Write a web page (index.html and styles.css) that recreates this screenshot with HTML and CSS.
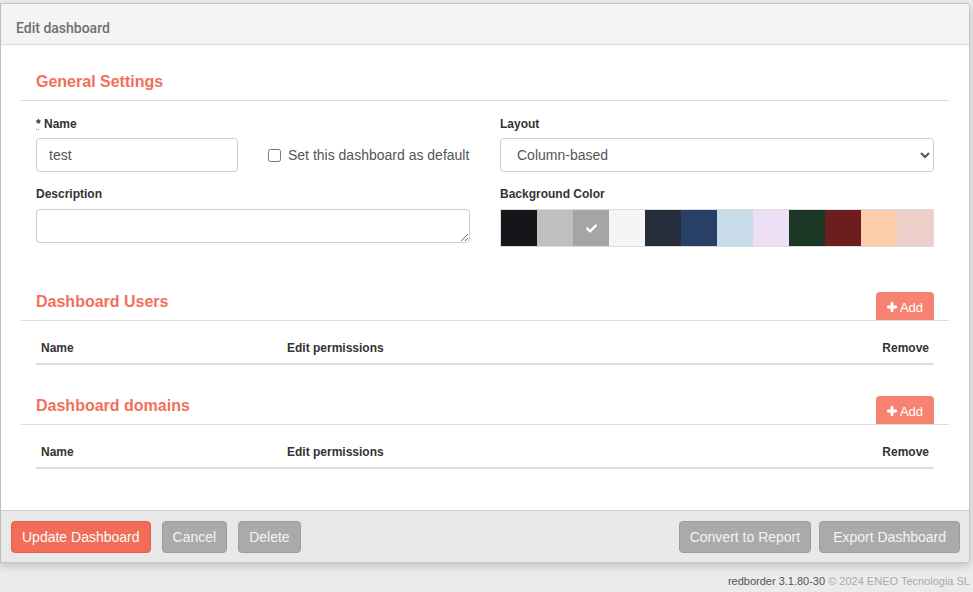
FILE: index.html
```html
<!DOCTYPE html>
<html>
<head>
<meta charset="utf-8">
<title>Edit dashboard</title>
<link rel="stylesheet" href="styles.css">
</head>
<body>
<div class="modal">
  <div class="modal-header">
    <h4 class="modal-title">Edit dashboard</h4>
  </div>
  <div class="modal-body">
    <section class="section">
      <div class="section-head">
        <h3 class="section-title">General Settings</h3>
      </div>
      <div class="form-grid">
        <div class="col">
          <div class="name-row">
            <div class="field">
              <label class="lbl"><abbr title="required">*</abbr> Name</label>
              <input class="ctrl" type="text" value="test">
            </div>
            <label class="check">
              <input type="checkbox" class="cb">
              <span>Set this dashboard as default</span>
            </label>
          </div>
        </div>
        <div class="col">
          <div class="field">
            <label class="lbl">Layout</label>
            <select class="ctrl sel">
              <option>Column-based</option>
            </select>
          </div>
        </div>
        <div class="col">
          <div class="field">
            <label class="lbl lbl2">Description</label>
            <textarea class="ctrl ta"></textarea>
          </div>
        </div>
        <div class="col">
          <div class="field">
            <label class="lbl lbl2">Background Color</label>
            <div class="swatches">
              <span class="sw c1"></span>
              <span class="sw c2"></span>
              <span class="sw c3 selected">
                <svg width="11" height="9" viewBox="0 0 11 9"><path d="M1.2 4.6 L4.1 7.4 L9.8 1.6" fill="none" stroke="#fff" stroke-width="2.4" stroke-linecap="round" stroke-linejoin="round"/></svg>
              </span>
              <span class="sw c4"></span>
              <span class="sw c5"></span>
              <span class="sw c6"></span>
              <span class="sw c7"></span>
              <span class="sw c8"></span>
              <span class="sw c9"></span>
              <span class="sw c10"></span>
              <span class="sw c11"></span>
              <span class="sw c12"></span>
            </div>
          </div>
        </div>
      </div>
    </section>

    <section class="section users">
      <div class="section-head">
        <h3 class="section-title">Dashboard Users</h3>
        <button class="add-btn"><svg width="10" height="10" viewBox="0 0 10 10"><path d="M5 1.2 V8.8 M1.2 5 H8.8" stroke="#fff" stroke-width="2.8" stroke-linecap="round"/></svg>Add</button>
      </div>
      <div class="table">
        <div class="th">Name</div>
        <div class="th">Edit permissions</div>
        <div class="th right">Remove</div>
      </div>
    </section>

    <section class="section domains">
      <div class="section-head">
        <h3 class="section-title">Dashboard domains</h3>
        <button class="add-btn"><svg width="10" height="10" viewBox="0 0 10 10"><path d="M5 1.2 V8.8 M1.2 5 H8.8" stroke="#fff" stroke-width="2.8" stroke-linecap="round"/></svg>Add</button>
      </div>
      <div class="table">
        <div class="th">Name</div>
        <div class="th">Edit permissions</div>
        <div class="th right">Remove</div>
      </div>
    </section>
  </div>
  <div class="modal-footer">
    <div class="btn-group">
      <button class="btn btn-primary">Update Dashboard</button>
      <button class="btn btn-gray">Cancel</button>
      <button class="btn btn-gray">Delete</button>
    </div>
    <div class="btn-group right-group">
      <button class="btn btn-gray">Convert to Report</button>
      <button class="btn btn-gray btn-wide">Export Dashboard</button>
    </div>
  </div>
</div>
<div class="copyright"><span class="ver">redborder 3.1.80-30</span> © 2024 ENEO Tecnologia SL</div>
</body>
</html>
```
FILE: styles.css
```css
* { box-sizing: border-box; }
html, body { margin: 0; padding: 0; }
body {
  background: #ebebeb;
  font-family: "Liberation Sans", Arial, sans-serif;
  font-size: 14px;
  color: #333;
  padding-top: 3px;
}
.modal {
  width: 970px;
  background: #fff;
  border: 1px solid #c6c6c6;
  border-left-color: #bdbdbd;
  border-radius: 0 4px 4px 0;
  box-shadow: 0 3px 9px rgba(0,0,0,0.18);
  overflow: hidden;
}
.modal-header {
  height: 41px;
  background: #f4f4f4;
  border-bottom: 1px solid #dadada;
  padding: 14px 15px 0;
}
.modal-title {
  margin: 0;
  font-family: Roboto, "Liberation Sans", sans-serif;
  font-weight: 500;
  font-size: 14px;
  line-height: 20px;
  color: #707070;
}
.modal-body {
  padding: 27px 20px 41px;
}
.section-head {
  display: flex;
  justify-content: space-between;
  align-items: flex-start;
  height: 29px;
  border-bottom: 1px solid #dddddd;
  padding: 0 15px 0 15px;
}
.section-title {
  margin: 0;
  font-size: 16px;
  line-height: 20px;
  font-weight: bold;
  color: #f36f5a;
}
.form-grid {
  display: grid;
  grid-template-columns: 434px 434px;
  column-gap: 30px;
  row-gap: 14px;
  padding: 0 15px;
  margin-top: 15px;
}
.name-row {
  display: grid;
  grid-template-columns: 202px 202px;
  column-gap: 30px;
  align-items: end;
}
.field { display: flex; flex-direction: column; }
.lbl {
  font-size: 12px;
  line-height: 17px;
  font-weight: bold;
  color: #333;
  margin-bottom: 5px;
}
.lbl2 { margin-bottom: 6px; }
.lbl abbr { text-decoration: underline dotted; text-decoration-color: #999; cursor: help; }
.ctrl {
  height: 34px;
  border: 1px solid #cccccc;
  border-radius: 4px;
  padding: 6px 12px;
  font-family: "Liberation Sans", Arial, sans-serif;
  font-size: 14px;
  color: #555;
  background: #fff;
  width: 100%;
  margin: 0;
}
.sel { padding-left: 12px; color: #555; }
.ta { resize: vertical; display: block; }
.check {
  display: flex;
  align-items: center;
  height: 34px;
  font-size: 14px;
  color: #555;
  gap: 7px;
}
.cb { width: 13px; height: 13px; margin: 0; }
.swatches {
  display: flex;
  border: 1px solid #dddddd;
  width: 434px;
}
.sw {
  width: 36px;
  height: 36px;
  display: flex;
  align-items: center;
  justify-content: center;
}
.c1 { background: #141518; }
.c2 { background: #bfbfbf; }
.c3 { background: #a5a5a5; }
.c4 { background: #f5f5f5; }
.c5 { background: #272e3b; }
.c6 { background: #283f66; }
.c7 { background: #c9dcea; }
.c8 { background: #ede0f5; }
.c9 { background: #1b3726; }
.c10 { background: #6e1d1f; }
.c11 { background: #fecdac; }
.c12 { background: #eccfc9; }
.users { margin-top: 45px; }
.domains { margin-top: 31px; }
.add-btn {
  height: 28px;
  width: 58px;
  border: none;
  border-radius: 4px 4px 0 0;
  background: #f5836f;
  color: #fff;
  font-family: "Liberation Sans", Arial, sans-serif;
  font-size: 13px;
  display: flex;
  align-items: center;
  justify-content: center;
  gap: 3px;
  padding: 2px 0 0;
}
.table {
  display: grid;
  grid-template-columns: 246px 1fr auto;
  margin: 12px 15px 0;
  border-bottom: 2px solid #dddddd;
}
.th {
  font-size: 12px;
  font-weight: bold;
  line-height: 17px;
  padding: 7px 5px 6px;
  color: #333;
}
.right { text-align: right; }
.modal-footer {
  display: flex;
  justify-content: space-between;
  background: #e8e8e8;
  border-top: 1px solid #cccccc;
  padding: 10px 9px 9px 10px;
}
.btn-group { display: flex; gap: 11px; }
.right-group { gap: 8px; }
.btn {
  height: 32px;
  padding: 0 10px;
  border-radius: 4px;
  font-family: "Liberation Sans", Arial, sans-serif;
  font-size: 14px;
  color: #f4f4f4;
  border: 1px solid #9c9c9c;
  background: #aaaaaa;
}
.btn-wide { padding: 0 13px; }
.btn-primary {
  background: #f26d58;
  border-color: #e3614d;
  color: #fbfbfb;
}
.copyright {
  text-align: right;
  font-size: 11px;
  line-height: 13px;
  color: #aaaaaa;
  margin-top: 12px;
  padding-right: 3px;
}
.ver { color: #555; }
```
